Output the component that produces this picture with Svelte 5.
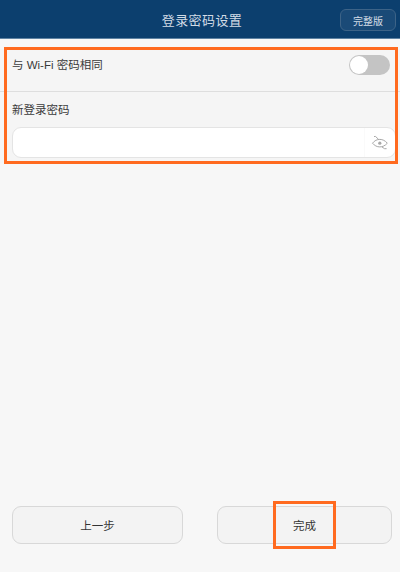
<script lang="ts">
	let sameAsWifi = $state(false);
	let password = $state('');
</script>

<div class="page">
	<header class="topbar">
		<h1 class="topbar__title">登录密码设置</h1>
		<button type="button" class="topbar__full">完整版</button>
	</header>

	<section class="form">
		<div class="form__row">
			<span class="form__label">与 Wi-Fi 密码相同</span>
			<button
				type="button"
				class="toggle"
				aria-label="与 Wi-Fi 密码相同"
				data-on={sameAsWifi}
				onclick={() => (sameAsWifi = !sameAsWifi)}
			>
				<span class="toggle__knob"></span>
			</button>
		</div>
		<div class="form__field">
			<span class="form__label">新登录密码</span>
			<div class="input">
				<input type="password" class="input__box" bind:value={password} />
				<span class="input__eye">
					<svg width="18" height="16" viewBox="0 0 18 16" fill="none" stroke="#a8a8a8" stroke-width="1">
						<path d="M1.500 8.200C3.600 5.600 6 4.400 8.800 4.400s5.300 1.200 7.500 3.800c-2.200 2.500-4.700 3.700-7.500 3.700S3.600 10.700 1.500 8.200Z" />
						<circle cx="8.800" cy="8.200" r="1.600" fill="#a8a8a8" stroke="none" />
						<path d="M3 1.500h1.600l3 2.900M11 12l2.600 1.700h2" />
					</svg>
				</span>
			</div>
		</div>
		<span class="mark mark--form"></span>
	</section>

	<footer class="actions">
		<button type="button" class="actions__btn actions__btn--prev">上一步</button>
		<button type="button" class="actions__btn actions__btn--done">完成</button>
		<span class="mark mark--done"></span>
	</footer>
</div>

<style>
	:global(body) {
		background: #f7f7f7;
	}

	.page {
		position: relative;
		display: flex;
		flex-direction: column;
		height: 572px;
		overflow: hidden;
		background: #f7f7f7;
		color: #333;
		font-family: "Liberation Sans", "Noto Sans CJK SC", sans-serif;
		font-size: 12px;
	}

	button {
		font-family: inherit;
		padding: 0;
		cursor: pointer;
	}

	.topbar {
		position: relative;
		display: flex;
		align-items: center;
		justify-content: center;
		flex: none;
		height: 38px;
		background: #0c3f6e;
		border-bottom: 1px solid #5f83a3;
	}

	.topbar__title {
		margin: 0;
		padding-left: 4px;
		color: #d3dce6;
		font-size: 13px;
		font-weight: 400;
		letter-spacing: 0.4px;
	}

	.topbar__full {
		position: absolute;
		top: 9px;
		right: 4px;
		width: 56px;
		height: 22px;
		border: 1px solid #3d6387;
		border-radius: 6px;
		background: #1a4a77;
		color: #d3dce6;
		font-size: 10px;
	}

	.form {
		position: relative;
		display: flex;
		flex-direction: column;
		flex: none;
		margin-top: 10px;
		height: 114px;
		background: #f5f5f5;
	}

	.form__row {
		display: flex;
		justify-content: space-between;
		box-sizing: border-box;
		height: 43px;
		padding: 8px 10px 0 12px;
		border-bottom: 1px solid #dedede;
	}

	.form__field {
		display: flex;
		flex-direction: column;
		gap: 8px;
		padding: 10px 4px 0 12px;
	}

	.form__label {
		line-height: 17px;
		color: #3a3a3a;
		font-size: 11.5px;
	}

	.toggle {
		display: flex;
		align-items: center;
		width: 41px;
		height: 20px;
		margin-top: -2px;
		padding: 0 1px;
		border: none;
		border-radius: 10px;
		background: #c4c4c4;
	}

	.toggle__knob {
		width: 18px;
		height: 18px;
		border-radius: 50%;
		background: #fff;
	}

	.toggle[data-on='true'] {
		justify-content: flex-end;
		background: #2f7fc1;
	}

	.input {
		display: flex;
		height: 31px;
		box-sizing: border-box;
		border: 1px solid #e4e4e4;
		border-radius: 9px;
		background: #fff;
	}

	.input__box {
		flex: 1;
		min-width: 0;
		border: none;
		outline: none;
		background: transparent;
	}

	.input__eye {
		display: flex;
		align-items: center;
		justify-content: center;
		width: 30px;
		border-left: 1px solid #fafafa;
	}

	.actions {
		position: relative;
		display: flex;
		justify-content: space-between;
		margin-top: auto;
		padding: 0 8px 28px 12px;
	}

	.actions__btn {
		height: 38px;
		border: 1px solid #d8d8d8;
		border-radius: 9px;
		background: #f3f3f3;
		color: #333;
		font-size: 11.5px;
	}

	.actions__btn--prev {
		width: 171px;
	}

	.actions__btn--done {
		width: 175px;
	}

	.mark {
		position: absolute;
		box-sizing: border-box;
		border: 3px solid #ff6a1f;
		pointer-events: none;
	}

	.mark--form {
		top: -2px;
		left: 4px;
		width: 394px;
		height: 117px;
	}

	.mark--done {
		top: -5px;
		left: 273px;
		width: 63px;
		height: 48px;
	}
</style>
